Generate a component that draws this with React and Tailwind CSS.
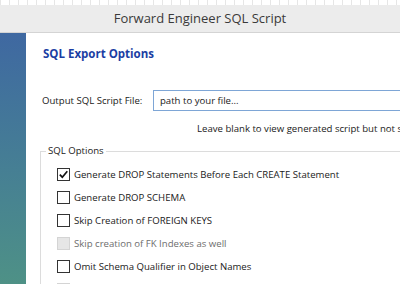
import React from "react";

function Box({ checked, disabled }) {
  return (
    <div
      className={
        "w-[13px] h-[13px] border flex items-center justify-center shrink-0 " +
        (disabled ? "border-[#d4d4d4] bg-[#e6e6e6]" : "border-[#333333] bg-white")
      }
    >
      {checked && (
        <svg width="11" height="11" viewBox="0 0 11 11">
          <path d="M1.8 5.6 L4.3 8.2 L9.3 2.2" fill="none" stroke="#111" strokeWidth="1.7" />
        </svg>
      )}
    </div>
  );
}

function Row({ label, checked, disabled }) {
  return (
    <div className="flex items-center h-[23px] gap-[4px]">
      <Box checked={checked} disabled={disabled} />
      <span className={"whitespace-nowrap " + (disabled ? "text-[#6d6d6d]" : "text-[#1a1a1a]")}>{label}</span>
    </div>
  );
}

export default function App() {
  return (
    <div
      className="w-[400px] h-[284px] overflow-hidden bg-white flex flex-col"
      style={{ fontFamily: '"Open Sans", "Noto Sans", sans-serif' }}
    >
      <div className="h-[5px] shrink-0 bg-[repeating-linear-gradient(90deg,#e6e6e6_0,#e6e6e6_1px,#ffffff_1px,#ffffff_9px)]" />
      <div className="h-[28px] shrink-0 bg-[#ececec] border-b border-[#d4d4d4] flex items-center justify-center text-[13px] text-[#3a3a3a]">
        Forward Engineer SQL Script
      </div>
      <div className="flex flex-1 min-h-0">
        <div className="w-[26px] shrink-0 bg-gradient-to-b from-[#3f68a1] to-[#4e9186]" />
        <div className="flex-1 min-w-0 text-[9.6px] leading-[14px]">
          <div className="pl-[17px] pt-[14px] text-[11.5px] font-bold text-[#1b3ea3] leading-[14px]">
            SQL Export Options
          </div>
          <div className="flex items-center pl-[16px] mt-[29px]">
            <span className="text-[#1a1a1a] whitespace-nowrap w-[111px] shrink-0">Output SQL Script File:</span>
            <div className="flex-1 h-[21px] border border-[#7ea6d6] border-r-0 flex items-center pl-[6px] text-[#1a1a1a] whitespace-nowrap">
              path to your file...
            </div>
          </div>
          <div className="pl-[171px] mt-[11px] whitespace-nowrap text-[#1a1a1a] overflow-hidden">
            Leave blank to view generated script but not saved to a file.
          </div>
          <div className="ml-[14px] mt-[15px] border-t border-l border-[#dcdcdc] relative pt-[11px] pl-[16px]">
            <span className="absolute -top-[8px] left-[5px] bg-white px-[2px] text-[#1a1a1a]">SQL Options</span>
            <Row label="Generate DROP Statements Before Each CREATE Statement" checked />
            <Row label="Generate DROP SCHEMA" />
            <Row label="Skip Creation of FOREIGN KEYS" />
            <Row label="Skip creation of FK Indexes as well" disabled />
            <Row label="Omit Schema Qualifier in Object Names" />
            <Row label="Generate Separate CREATE INDEX Statements" disabled />
          </div>
        </div>
      </div>
    </div>
  );
}
